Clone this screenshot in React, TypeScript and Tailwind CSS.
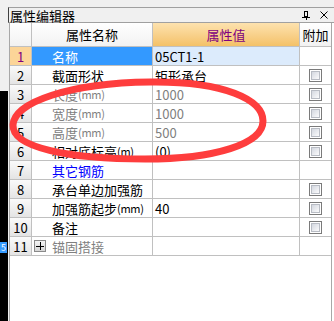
import React from 'react';

type Row = {
  no: number;
  name: string;
  unit?: string;
  value?: string;
  tone?: 'normal' | 'gray' | 'blue';
  check?: boolean;
  expand?: boolean;
  selected?: boolean;
};

const rows: Row[] = [
  { no: 1, name: '名称', value: '05CT1-1', selected: true },
  { no: 2, name: '截面形状', value: '矩形承台', check: true },
  { no: 3, name: '长度', unit: '(mm)', value: '1000', tone: 'gray', check: true },
  { no: 4, name: '宽度', unit: '(mm)', value: '1000', tone: 'gray', check: true },
  { no: 5, name: '高度', unit: '(mm)', value: '500', tone: 'gray', check: true },
  { no: 6, name: '相对底标高', unit: '(m)', value: '(0)', check: true },
  { no: 7, name: '其它钢筋', tone: 'blue' },
  { no: 8, name: '承台单边加强筋', check: true },
  { no: 9, name: '加强筋起步', unit: '(mm)', value: '40', check: true },
  { no: 10, name: '备注', check: true },
  { no: 11, name: '锚固搭接', tone: 'gray', expand: true },
];

function CheckBox() {
  return (
    <div className="w-[13px] h-[13px] border border-[#7a7a7a] bg-white p-px">
      <div className="w-full h-full border border-[#b8bcc4] bg-linear-to-br from-[#d4d8e0] to-[#fbfbfc]" />
    </div>
  );
}

function PlusBox() {
  return (
    <div className="w-[12px] h-[12px] border border-[#8a8a8a] bg-linear-to-b from-[#f4f4f4] to-[#d6d6d6] flex items-center justify-center">
      <svg width="8" height="8" viewBox="0 0 8 8">
        <path d="M0 4h8M4 0v8" stroke="#000" strokeWidth="1" shapeRendering="crispEdges" />
      </svg>
    </div>
  );
}

export default function App() {
  const textColor = (t?: Row['tone']) =>
    t === 'gray' ? 'text-[#808080]' : t === 'blue' ? 'text-[#0000ff]' : 'text-black';

  return (
    <div
      className="relative w-[334px] h-[321px] overflow-hidden bg-[#f0f0f0] flex text-[13px] leading-none"
      style={{ fontFamily: '"Noto Sans CJK SC", "Noto Sans", sans-serif' }}
    >
      {/* left strip of the window behind */}
      <div className="w-[8px] flex flex-col">
        <div className="h-[91px] bg-[#f0f0f0]" />
        <div className="flex-1 bg-black flex flex-col">
          <div className="h-[151px]" />
          <div className="h-[11px] w-[7px] bg-[#3399ff] text-white text-[9px] leading-[11px] text-center">5</div>
        </div>
      </div>

      {/* panel */}
      <div className="flex-1 flex flex-col">
        <div className="h-[23px] flex flex-col">
          <div className="h-[7px]" />
          <div className="flex-1 flex items-center border-t border-l border-t-[#a0a0a0] border-l-[#404040] border-b border-b-[#a0a0a0]">
            <span className="pl-[1px] text-[13px] text-black">属性编辑器</span>
            <div className="flex-1" />
            <svg width="8" height="9" viewBox="0 0 8 9" className="mr-[10px]">
              <path d="M0 6h8M4 6v3" stroke="#000" strokeWidth="1" fill="none" shapeRendering="crispEdges" />
              <rect x="2.5" y="0.5" width="3" height="5" fill="none" stroke="#000" shapeRendering="crispEdges" />
            </svg>
            <svg width="8" height="8" viewBox="0 0 8 8" className="mr-[6px]">
              <path d="M0.5 0.5L7.5 7.5M7.5 0.5L0.5 7.5" stroke="#000" strokeWidth="1" />
            </svg>
          </div>
        </div>

        <div className="flex-1 flex ml-[1px] bg-white border-l border-[#a8a8a8]">
          <div className="w-[322px] flex flex-col border-r border-[#a8a8a8]">
            {/* header */}
            <div className="h-[24px] flex border-b border-[#c0c0c0]">
              <div className="w-[22px] border-r border-[#c0c0c0] bg-linear-to-b from-white to-[#f2f2f2]" />
              <div className="w-[121px] border-r border-[#c0c0c0] bg-linear-to-b from-white to-[#f2f2f2] flex items-center justify-center">
                属性名称
              </div>
              <div className="w-[147px] border-r border-[#c0c0c0] bg-linear-to-b from-[#fde2ae] to-[#f4c167] flex items-center justify-center text-[#800080]">
                属性值
              </div>
              <div className="flex-1 bg-linear-to-b from-white to-[#f2f2f2] flex items-center justify-center">
                附加
              </div>
            </div>

            {rows.map((r) => (
              <div key={r.no} className="h-[19px] flex border-b border-[#c0c0c0]">
                <div
                  className={`w-[22px] border-r border-[#c0c0c0] flex items-center justify-center ${
                    r.selected
                      ? 'bg-[#fcd598] text-[#800080]'
                      : 'bg-linear-to-b from-[#fafafa] to-[#e4e4e4] text-black'
                  }`}
                >
                  {r.no}
                </div>
                <div
                  className={`w-[121px] border-r border-[#c0c0c0] flex items-center whitespace-nowrap overflow-hidden ${
                    r.selected ? 'bg-[#3399ff] text-white' : textColor(r.tone)
                  } ${r.expand ? 'pl-[2px]' : 'pl-[20px]'}`}
                >
                  {r.expand && (
                    <div className="mr-[6px]">
                      <PlusBox />
                    </div>
                  )}
                  {r.name}
                  {r.unit && <span className="text-[11px] tracking-[-0.3px]">{r.unit}</span>}
                </div>
                <div
                  className={`w-[147px] border-r border-[#c0c0c0] flex items-center pl-[2px] whitespace-nowrap ${
                    r.selected ? 'bg-[#dcebfc]' : ''
                  } ${textColor(r.tone)}`}
                >
                  {r.value}
                </div>
                <div className="flex-1 flex items-center justify-center">{r.check && <CheckBox />}</div>
              </div>
            ))}
            <div className="flex-1" />
          </div>
          <div className="flex-1 bg-white" />
        </div>
      </div>

      {/* red hand-drawn ellipse over the table */}
      <svg className="absolute left-0 top-0 pointer-events-none" width="334" height="321" viewBox="0 0 334 321">
        <path
          d="M13 125 C 14 102, 70 83, 150 82 C 225 81, 263 100, 263 121 C 263 144, 215 159, 145 159 C 70 159, 12 148, 13 125 Z"
          fill="none"
          stroke="#fe3d3d"
          strokeWidth="7"
        />
      </svg>
    </div>
  );
}
